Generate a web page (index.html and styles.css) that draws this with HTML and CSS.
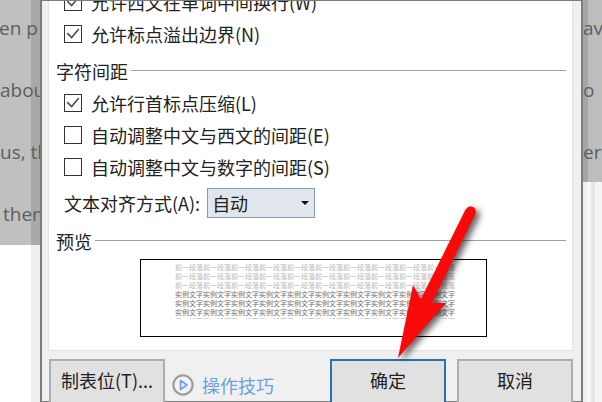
FILE: index.html
```html
<!DOCTYPE html>
<html lang="zh">
<head>
<meta charset="utf-8">
<title>段落</title>
<link rel="stylesheet" href="styles.css">
</head>
<body>
<div class="page">
  <div class="side side-left">
    <div class="doc">
      <p class="doc-line shift-a">en p</p>
      <p class="doc-line">abou</p>
      <p class="doc-line">us, th</p>
      <p class="doc-line shift-b">then</p>
    </div>
  </div>
  <div class="dialog">
    <div class="panel">
      <div class="row first"><span class="box checked"><svg viewBox="0 0 18 18" class="tick"><path d="M2.5 8 L7.5 13 L15.5 3.5"/></svg></span><span>允许西文在单词中间换行(W)</span></div>
      <div class="row"><span class="box checked"><svg viewBox="0 0 18 18" class="tick"><path d="M2.5 8 L7.5 13 L15.5 3.5"/></svg></span><span>允许标点溢出边界(N)</span></div>
      <div class="group group-a"><span>字符间距</span><i class="rule"></i></div>
      <div class="row"><span class="box checked"><svg viewBox="0 0 18 18" class="tick"><path d="M2.5 8 L7.5 13 L15.5 3.5"/></svg></span><span>允许行首标点压缩(L)</span></div>
      <div class="row"><span class="box"></span><span>自动调整中文与西文的间距(E)</span></div>
      <div class="row"><span class="box"></span><span>自动调整中文与数字的间距(S)</span></div>
      <div class="align">
        <span>文本对齐方式(A):</span>
        <div class="combo"><span>自动</span><i class="caret"></i></div>
      </div>
      <div class="group group-b"><span>预览</span><i class="rule"></i></div>
      <div class="preview">
        <div class="sample">
          <p class="prev">前一段落前一段落前一段落前一段落前一段落前一段落前一段落前一段落前一段落前一段落</p>
          <p class="prev">前一段落前一段落前一段落前一段落前一段落前一段落前一段落前一段落前一段落前一段落</p>
          <p class="prev">前一段落前一段落前一段落前一段落前一段落前一段落前一段落前一段落前一段落前一段落</p>
          <p class="cur">实例文字实例文字实例文字实例文字实例文字实例文字实例文字实例文字实例文字实例文字</p>
          <p class="cur">实例文字实例文字实例文字实例文字实例文字实例文字实例文字实例文字实例文字实例文字</p>
          <p class="cur">实例文字实例文字实例文字实例文字实例文字实例文字实例文字实例文字实例文字实例文字</p>
          <p class="prev">后一段落后一段落后一段落后一段落后一段落后一段落后一段落后一段落后一段落后一段落</p>
        </div>
      </div>
    </div>
    <div class="footer">
      <button class="btn">制表位(T)...</button>
      <a class="tips">
        <svg class="play" viewBox="0 0 22 22"><circle cx="11" cy="11" r="9.6"/><path d="M8.5 6.5 L15 11 L8.5 15.5 Z"/></svg>
        <span>操作技巧</span>
      </a>
      <button class="btn primary">确定</button>
      <button class="btn">取消</button>
    </div>
  </div>
  <div class="side side-right">
    <div class="doc doc-right">
      <p class="doc-line">av</p>
      <p class="doc-line">o</p>
      <p class="doc-line">er</p>
    </div>
  </div>
  <svg class="arrow" viewBox="0 0 602 402" width="602" height="402">
    <path d="M465.5 209.5 Q470 204 474.5 208 Q477 211 475 215 L432 303 L446 303 L398 358 L413 285 L421 299 Z"/>
  </svg>
</div>
</body>
</html>
```
FILE: styles.css
```css
* { box-sizing: border-box; }
html, body { margin: 0; padding: 0; background: #fff; }
.page {
  position: relative;
  display: flex;
  width: 602px;
  height: 402px;
  overflow: hidden;
  font-family: "Noto Sans CJK SC", "Liberation Sans", sans-serif;
  font-size: 18px;
  color: #222;
}
.side { overflow: hidden; height: 402px; }
.side-left { width: 40px; background: linear-gradient(90deg, #fff 0 31px, #efefef 31px 40px); }
.side-right { width: 19px; background: linear-gradient(90deg, #efefef 0 4px, #f7f7f7 4px 8px, #e4e4e4 8px 12px, #f4f4f4 12px 19px); }
.doc {
  height: 245px;
  background: linear-gradient(90deg, #c0c0c0 0 31px, #a9a9a9 31px 40px);
  color: #5c5f62;
  font-family: "Open Sans", sans-serif;
  font-size: 19px;
  padding-top: 1px;
}
.doc-right {
  height: 182px;
  background: linear-gradient(90deg, #a6a6a6 0 5px, #bdbdbd 5px 19px);
}
.doc-line { margin: 0; height: 62px; line-height: 54px; white-space: nowrap; }
.shift-a { margin-left: -1px; }
.shift-b { margin-left: 3px; }

.dialog {
  width: 543px;
  height: 402px;
  flex: none;
  display: flex;
  flex-direction: column;
  background: #f0f0f0;
  border: 1px solid #7d7d7d;
  border-width: 1px 2px 1px 2px;
  padding: 0 8px 0 6px;
}
.panel {
  height: 350px;
  flex: none;
  background: #fff;
  border: 1px solid #e2e2e2;
  border-top: 0;
  overflow: hidden;
  padding-left: 7px;
  padding-right: 6px;
}
.row {
  display: flex;
  align-items: center;
  gap: 9px;
  height: 32px;
  padding-left: 8px;
  line-height: 32px;
  white-space: nowrap;
}
.first { margin-top: -15px; }
.box {
  width: 18px;
  height: 18px;
  flex: none;
  border: 1px solid #333;
  background: #fff;
  display: block;
}
.tick { display: block; width: 16px; height: 16px; fill: none; stroke: #4a4a4a; stroke-width: 1.7; }
.group {
  display: flex;
  align-items: center;
  gap: 3px;
  height: 32px;
  line-height: 32px;
}
.group-a { margin-top: 5px; }
.group-b { margin-top: 6px; }
.rule { flex: 1; height: 1px; background: #a0a0a0; margin-top: -2px; }
.align {
  display: flex;
  align-items: center;
  gap: 7px;
  height: 32px;
  margin-top: 4px;
  padding-left: 8px;
  white-space: nowrap;
}
.combo {
  display: flex;
  align-items: center;
  justify-content: space-between;
  width: 108px;
  height: 30px;
  padding: 0 5px 0 4px;
  background: #e1e6ec;
  border: 1px solid #7f9db9;
}
.caret {
  width: 0;
  height: 0;
  border: 4px solid transparent;
  border-top: 4px solid #111;
  border-bottom: 0;
}
.preview {
  width: 347px;
  height: 78px;
  margin: 2px 0 0 84px;
  border: 1px solid #000;
  padding: 3px 0 0 34px;
  overflow: hidden;
}
.sample { height: 56px; width: 280px; overflow: hidden; font-size: 7px; line-height: 9px; }
.sample p { margin: 0; height: 9px; white-space: nowrap; overflow: hidden; }
.prev { color: #b9b9b9; }
.cur { color: #6e6e6e; }

.footer {
  flex: 1;
  display: flex;
  align-items: flex-start;
  padding: 8px 0 0 1px;
  height: 50px;
}
.btn {
  flex: none;
  width: 116px;
  height: 46px;
  padding: 0 0 4px;
  background: #e1e1e1;
  border: 2px solid #adadad;
  font: inherit;
  color: #222;
}
.btn.primary {
  border-color: #2a72ab;
  margin-right: 11px;
}
.tips {
  display: flex;
  align-items: center;
  gap: 8px;
  width: 167px;
  height: 44px;
  padding: 8px 0 0 7px;
  color: #6a9fe3;
}
.play { width: 22px; height: 22px; flex: none; }
.play circle { fill: #f4f4f8; stroke: #9c9c9c; stroke-width: 2.2; }
.play path { fill: #e8eefc; stroke: #6a9fe3; stroke-width: 1.6; stroke-linejoin: round; }
.arrow {
  position: absolute;
  left: 0;
  top: 0;
  fill: #f80a0a;
  filter: drop-shadow(4px 3px 3px rgba(0, 0, 0, .6));
  pointer-events: none;
}
```
